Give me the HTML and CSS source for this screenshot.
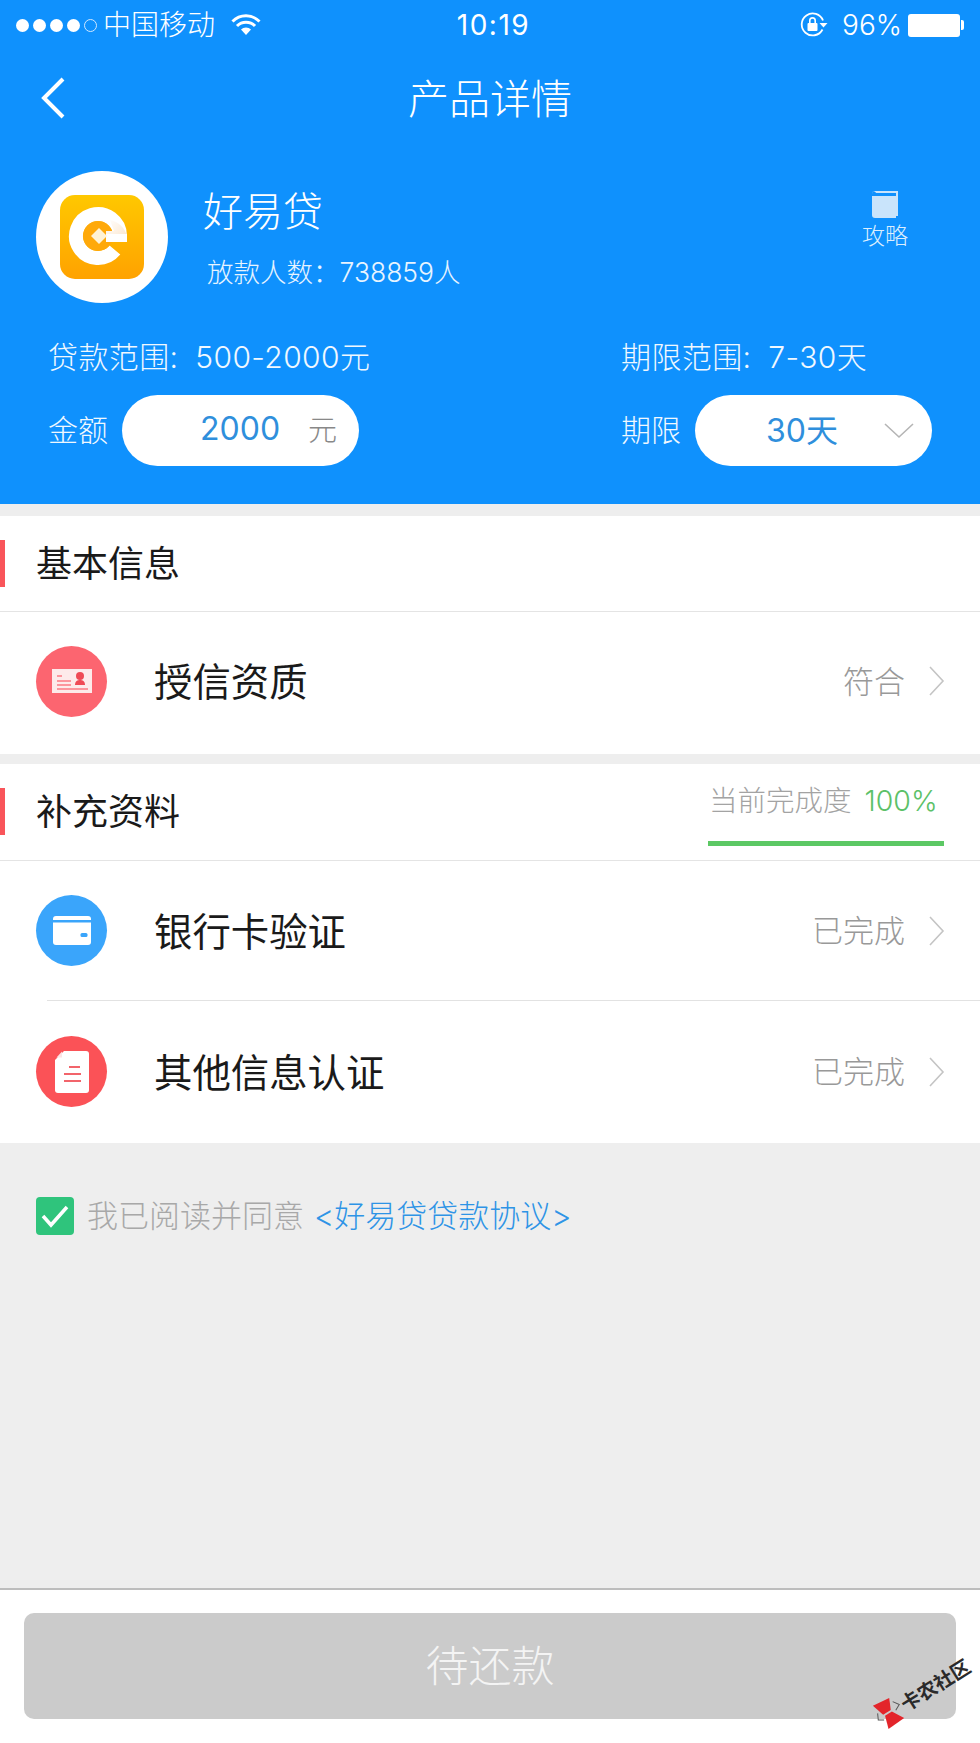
FILE: index.html
```html
<!doctype html>
<html lang="zh-CN">
<head>
    <meta charset="utf-8">
    <meta name="viewport" content="width=device-width, initial-scale=1">
    <title>产品详情</title>
    <link rel="stylesheet" href="styles.css">
</head>
<body>
    <div class="page">
        <header class="header">
            <div class="status-bar">
                <div class="status-left">
                    <span class="dots"><i></i><i></i><i></i><i></i><i class="empty"></i></span>
                    <span class="carrier">中国移动</span>
                    <svg class="wifi" width="30" height="22" viewBox="0 0 30 22">
                        <path d="M1.5 7.5a19 19 0 0 1 27 0M6 12a12.6 12.6 0 0 1 18 0" fill="none" stroke="#fff" stroke-width="3"/>
                        <path d="M10 15.6a7 7 0 0 1 10 0L15 21z" fill="#fff"/>
                    </svg>
                </div>
                <div class="time">10:19</div>
                <div class="status-right">
                    <svg class="lock" width="28" height="26" viewBox="0 0 28 26">
                        <path d="M22.5 17.5A11 11 0 1 1 23 8.5" fill="none" stroke="#fff" stroke-width="1.8"/>
                        <path d="M19.5 11h8l-4 4.5z" fill="#fff"/>
                        <rect x="7.5" y="11" width="10" height="8" rx="1" fill="#fff"/>
                        <path d="M9.8 11V8.6a2.7 2.7 0 0 1 5.4 0V11" fill="none" stroke="#fff" stroke-width="1.6"/>
                    </svg>
                    <span class="battery-text">96%</span>
                    <span class="battery"><i></i></span>
                </div>
            </div>

            <div class="nav">
                <svg class="back" width="24" height="42" viewBox="0 0 24 42">
                    <path d="M22 2L3 21l19 19" fill="none" stroke="#fff" stroke-width="4"/>
                </svg>
                <h1>产品详情</h1>
            </div>

            <div class="profile">
                <div class="avatar">
                    <svg width="84" height="84" viewBox="0 0 84 84">
                        <defs>
                            <linearGradient id="logoBg" x1="0" y1="0" x2="0" y2="1">
                                <stop offset="0" stop-color="#ffc800"/>
                                <stop offset="1" stop-color="#ffa200"/>
                            </linearGradient>
                            <linearGradient id="logoShade" x1="0" y1="0" x2="1" y2="1">
                                <stop offset="0" stop-color="#fff"/>
                                <stop offset="1" stop-color="#fbe3c8"/>
                            </linearGradient>
                        </defs>
                        <rect width="84" height="84" rx="15" fill="url(#logoBg)"/>
                        <path d="M54.900 55.100A22 22 0 1 1 60 41" fill="none" stroke="#fff" stroke-width="14"/>
                        <circle cx="38" cy="41" r="15" fill="#ffa90a"/>
                        <path d="M50 25a22 22 0 0 1 17 16v6H46V36h8z" fill="url(#logoShade)"/>
                        <path d="M46 39h21v8H46z" fill="#fff"/>
                        <path d="M39 33l8 8-8 8-8-8z" fill="#fff3d6"/>
                    </svg>
                </div>
                <div class="profile-text">
                    <div class="name">好易贷</div>
                    <div class="count">放款人数：738859人</div>
                </div>
                <div class="guide">
                    <svg width="26" height="28" viewBox="0 0 26 28">
                        <path d="M0 4a3 3 0 0 1 3-3h23v25H24V3H4a2 2 0 0 0-4 1z" fill="#c9e4fb"/>
                        <path d="M0 6h24v22H3a3 3 0 0 1-3-3z" fill="#c9e4fb"/>
                    </svg>
                    <span>攻略</span>
                </div>
            </div>

            <div class="ranges">
                <div class="range">
                    <div class="range-title">贷款范围: 500-2000元</div>
                    <div class="range-field">
                        <span class="field-label">金额</span>
                        <div class="pill pill-amount">
                            <span class="pill-value">2000</span>
                            <span class="pill-unit">元</span>
                        </div>
                    </div>
                </div>
                <div class="range">
                    <div class="range-title">期限范围: 7-30天</div>
                    <div class="range-field">
                        <span class="field-label">期限</span>
                        <div class="pill pill-term">
                            <span class="pill-value">30天</span>
                            <svg width="30" height="16" viewBox="0 0 30 16">
                                <path d="M1 1l14 13L29 1" fill="none" stroke="#b5b5b5" stroke-width="1.6"/>
                            </svg>
                        </div>
                    </div>
                </div>
            </div>
        </header>

        <section class="section">
            <div class="section-head section-head-short">
                <h2>基本信息</h2>
            </div>
            <div class="row row-last">
                <span class="row-icon icon-card">
                    <svg width="40" height="24" viewBox="0 0 40 24">
                        <rect width="40" height="24" fill="#fdeaea"/>
                        <path d="M5 7h5M5 12h14M5 16h14M5 20h31" stroke="#fc7a82" stroke-width="1.3"/>
                        <circle cx="28" cy="7" r="4" fill="#ef4a55"/>
                        <path d="M23 16c0-4 2.500-5 5-5s5 1 5 5z" fill="#ef4a55"/>
                    </svg>
                </span>
                <span class="row-label">授信资质</span>
                <span class="row-status">符合</span>
                <svg class="row-arrow" width="16" height="30" viewBox="0 0 16 30">
                    <path d="M1 1l13 14L1 29" fill="none" stroke="#c4c4c4" stroke-width="1.6"/>
                </svg>
            </div>
        </section>

        <section class="section">
            <div class="section-head">
                <h2>补充资料</h2>
                <div class="progress">
                    <div class="progress-text">当前完成度<em>100%</em></div>
                </div>
            </div>
            <div class="row">
                <span class="row-icon icon-bank">
                    <svg width="38" height="29" viewBox="0 0 38 29">
                        <path d="M0 3a3 3 0 0 1 3-3h32a3 3 0 0 1 3 3v1H0z" fill="#fff"/>
                        <path d="M0 6.500h38V26a3 3 0 0 1-3 3H3a3 3 0 0 1-3-3z" fill="#fff"/>
                        <rect x="27.500" y="17" width="7" height="4" rx="1.500" fill="#3aa5fb"/>
                    </svg>
                </span>
                <span class="row-label">银行卡验证</span>
                <span class="row-status">已完成</span>
                <svg class="row-arrow" width="16" height="30" viewBox="0 0 16 30">
                    <path d="M1 1l13 14L1 29" fill="none" stroke="#c4c4c4" stroke-width="1.6"/>
                </svg>
            </div>
            <div class="row row-divided">
                <span class="row-icon icon-doc">
                    <svg width="34" height="42" viewBox="0 0 34 42">
                        <path d="M9 0h22a3 3 0 0 1 3 3v36a3 3 0 0 1-3 3H3a3 3 0 0 1-3-3V9z" fill="#fff"/>
                        <path d="M1.500 6.500L7 .5v6z" fill="#fde3e5"/>
                        <path d="M14 16h11M9 23h17M9 30h17" stroke="#f2646b" stroke-width="2"/>
                    </svg>
                </span>
                <span class="row-label">其他信息认证</span>
                <span class="row-status">已完成</span>
                <svg class="row-arrow" width="16" height="30" viewBox="0 0 16 30">
                    <path d="M1 1l13 14L1 29" fill="none" stroke="#c4c4c4" stroke-width="1.6"/>
                </svg>
            </div>
        </section>

        <div class="agreement">
            <span class="checkbox">
                <svg width="28" height="24" viewBox="0 0 28 24">
                    <path d="M2 12l8 9L26 3" fill="none" stroke="#fff" stroke-width="3.500"/>
                </svg>
            </span>
            <span class="agree-text">我已阅读并同意</span>
            <span class="agree-link">&lt;好易贷贷款协议&gt;</span>
        </div>

        <footer class="footer">
            <button class="submit" type="button">待还款</button>
            <div class="watermark">
                <svg width="30" height="30" viewBox="0 0 30 30">
                    <path d="M5 1l18 2-5 11H9z" fill="#e3252b"/>
                    <path d="M10 16h8l7 12-19 1z" fill="#e3252b"/>
                    <path d="M24 8l4 6-6 3M5 10l-3 6 5 3" fill="none" stroke="#555" stroke-width="1"/>
                </svg>
                <span>卡农社区</span>
            </div>
        </footer>
    </div>
</body>
</html>
```

FILE: styles.css
```css
* {
    margin: 0;
    padding: 0;
    box-sizing: border-box;
}

body {
    background-color: #eeeeee;
    font-family: Inter, "Noto Sans CJK SC", sans-serif;
    font-weight: 300;
    color: #1a1a1a;
}

.page {
    display: flex;
    flex-direction: column;
    width: 980px;
    height: 1743px;
    overflow: hidden;
}

/* header */

.header {
    flex: none;
    height: 504px;
    background-color: #0f91fd;
    color: #fff;
}

.status-bar {
    display: grid;
    grid-template-columns: 1fr auto 1fr;
    align-items: center;
    height: 50px;
    padding: 0 17px 0 16px;
    font-size: 28px;
}

.status-left,
.status-right {
    display: flex;
    align-items: center;
}

.status-right {
    justify-content: flex-end;
}

.dots {
    display: flex;
    gap: 4px;
}

.dots i {
    width: 13px;
    height: 13px;
    border-radius: 50%;
    background-color: #fff;
}

.dots i.empty {
    background: none;
    border: 1.5px solid #cfe7fd;
}

.carrier {
    margin-left: 6px;
    line-height: 50px;
}

.wifi {
    margin-left: 16px;
}

.time {
    padding-left: 8px;
    font-size: 28px;
    font-weight: 400;
    line-height: 50px;
    letter-spacing: 1.5px;
}

.lock {
    margin-right: 14px;
}

.battery-text {
    font-size: 28px;
}

.battery {
    position: relative;
    width: 52px;
    height: 23px;
    margin: 0 3px 0 6px;
    border-radius: 3px;
    background-color: #fff;
}

.battery i {
    position: absolute;
    top: 6px;
    right: -4px;
    width: 3px;
    height: 10px;
    border-radius: 0 2px 2px 0;
    background-color: #fff;
}

.nav {
    position: relative;
    height: 98px;
    text-align: center;
}

.nav h1 {
    font-size: 41px;
    font-weight: 300;
    line-height: 98px;
}

.back {
    position: absolute;
    top: 27px;
    left: 41px;
}

.profile {
    display: flex;
    align-items: flex-start;
    height: 132px;
    margin-top: 23px;
    padding: 0 72px 0 36px;
}

.avatar {
    display: flex;
    flex: none;
    align-items: center;
    justify-content: center;
    width: 132px;
    height: 132px;
    border-radius: 50%;
    background-color: #fff;
}

.avatar svg {
    display: block;
}

.profile-text {
    flex: 1;
    margin-left: 35px;
}

.name {
    margin-top: 17px;
    font-size: 40px;
    line-height: 48px;
}

.count {
    margin-top: 18px;
    padding-left: 4px;
    font-size: 26.500px;
    line-height: 36px;
    color: #e8f4ff;
}

.guide {
    display: flex;
    flex-direction: column;
    align-items: center;
    margin-top: 19px;
    font-size: 23px;
    color: #dceefe;
}

.guide span {
    margin-top: 2px;
    line-height: 32px;
}

.ranges {
    display: grid;
    grid-template-columns: 573px 1fr;
    margin-top: 33px;
    padding-left: 48px;
}

.range-title {
    font-size: 30px;
    line-height: 42px;
    word-spacing: 8px;
    letter-spacing: 0.4px;
    color: #f0f8ff;
}

.range-field {
    display: flex;
    align-items: center;
    margin-top: 17px;
}

.field-label {
    width: 74px;
    padding-bottom: 6px;
    font-size: 30px;
    color: #f0f8ff;
}

.pill {
    display: flex;
    align-items: center;
    width: 237px;
    height: 71px;
    border-radius: 36px;
    background-color: #fff;
}

.pill-value {
    padding-bottom: 5px;
    color: #2f8fdc;
    font-size: 32px;
    font-weight: 400;
}

.pill-amount {
    padding-left: 78px;
}

.pill-unit {
    margin-left: 28px;
    padding-bottom: 5px;
    font-size: 29px;
    color: #888;
}

.pill-term {
    padding-left: 71px;
}

.pill-term svg {
    margin-left: 46px;
}

/* sections */

.section {
    flex: none;
    margin-top: 12px;
    background-color: #fff;
}

.section + .section {
    margin-top: 10px;
}

.section-head {
    position: relative;
    display: flex;
    justify-content: space-between;
    height: 97px;
    border-bottom: 1px solid #e4e4e4;
}

.section-head-short {
    height: 96px;
}

.section-head::before {
    content: "";
    position: absolute;
    top: 24px;
    left: 0;
    width: 5px;
    height: 47px;
    background-color: #f9555a;
}

.section-head h2 {
    padding-left: 36px;
    font-size: 36px;
    font-weight: 400;
    line-height: 97px;
}

.progress {
    width: 236px;
    height: 82px;
    margin-right: 36px;
    border-bottom: 5px solid #5cc864;
}

.progress-text {
    padding: 16px 0 0 1px;
    font-size: 28.500px;
    line-height: 42px;
    white-space: nowrap;
    color: #a3a3a3;
}

.progress-text em {
    margin-left: 13px;
    font-style: normal;
    color: #5cc168;
}

.row {
    position: relative;
    display: flex;
    align-items: center;
    height: 139px;
    padding: 0 35px 0 36px;
}

.row-last {
    height: 142px;
    padding-bottom: 4px;
}

.row-divided {
    height: 143px;
}

.row-divided::before {
    content: "";
    position: absolute;
    top: 0;
    left: 47px;
    right: 0;
    height: 1px;
    background-color: #e2e2e2;
}

.row-icon {
    display: flex;
    flex: none;
    align-items: center;
    justify-content: center;
    width: 71px;
    height: 71px;
    border-radius: 50%;
}

.icon-card {
    background-color: #fc6570;
}

.icon-bank {
    background-color: #3aa5fb;
}

.icon-doc {
    background-color: #fb5257;
}

.row-label {
    flex: 1;
    margin-left: 47px;
    padding-bottom: 4px;
    font-size: 38.400px;
    font-weight: 400;
}

.row-status {
    padding-bottom: 4px;
    font-size: 31px;
    color: #999;
}

.row-arrow {
    margin-left: 24px;
}

/* agreement */

.agreement {
    display: flex;
    flex: 1;
    align-items: flex-start;
    padding: 53px 0 0 36px;
    font-size: 31px;
    line-height: 40px;
}

.checkbox {
    display: flex;
    align-items: center;
    justify-content: center;
    width: 38px;
    height: 38px;
    margin: 1px 13px 0 0;
    border-radius: 4px;
    background-color: #2fc47c;
}

.agree-text {
    color: #a8a8a8;
}

.agree-link {
    margin-left: 10px;
    color: #2e94e6;
}

/* footer */

.footer {
    position: relative;
    flex: none;
    height: 155px;
    padding: 23px 24px 0;
    border-top: 2px solid #bdbdbd;
    background-color: #fff;
}

.submit {
    display: block;
    width: 100%;
    height: 106px;
    padding-bottom: 6px;
    border: none;
    border-radius: 10px;
    background-color: #cbcbcb;
    font-family: inherit;
    font-size: 43px;
    font-weight: 300;
    color: #f4f4f4;
}

.watermark {
    position: absolute;
    top: 113px;
    left: 884px;
    display: flex;
    align-items: center;
    transform: rotate(-32deg);
    transform-origin: left bottom;
    font-size: 19.500px;
    font-weight: 700;
    white-space: nowrap;
    color: #2a2a2a;
}
```
